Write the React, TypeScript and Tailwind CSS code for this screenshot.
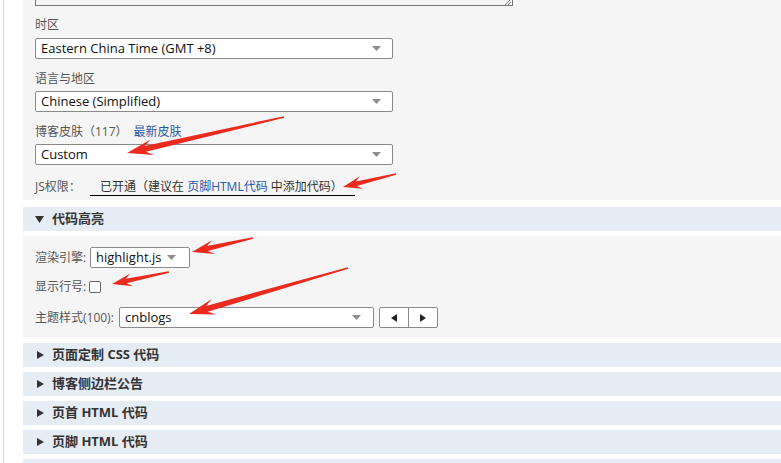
import type { ReactNode } from "react";

const FONT = { fontFamily: '"Open Sans", "Noto Sans CJK SC", sans-serif' };

type Arrow = { x1: number; y1: number; x2: number; y2: number; head: number; half: number; shaft: number };

const ARROWS: Arrow[] = [
  { x1: 284, y1: 117, x2: 127, y2: 153, head: 26, half: 8, shaft: 6 },
  { x1: 396, y1: 174, x2: 343, y2: 187, head: 19, half: 6.5, shaft: 4.5 },
  { x1: 253, y1: 238, x2: 192, y2: 252, head: 22, half: 7, shaft: 5 },
  { x1: 169, y1: 272, x2: 112, y2: 284, head: 20, half: 6.5, shaft: 4.5 },
  { x1: 348, y1: 268, x2: 189, y2: 314, head: 26, half: 8, shaft: 6 },
];

function arrowPoints(a: Arrow) {
  const dx = a.x2 - a.x1;
  const dy = a.y2 - a.y1;
  const len = Math.hypot(dx, dy);
  const ux = dx / len;
  const uy = dy / len;
  const nx = -uy;
  const ny = ux;
  const bx = a.x2 - ux * a.head * 0.72;
  const by = a.y2 - uy * a.head * 0.72;
  const cx = a.x2 - ux * a.head;
  const cy = a.y2 - uy * a.head;
  const pts: [number, number][] = [
    [a.x1 + nx * 0.8, a.y1 + ny * 0.8],
    [bx + (nx * a.shaft) / 2, by + (ny * a.shaft) / 2],
    [cx + nx * a.half, cy + ny * a.half],
    [a.x2, a.y2],
    [cx - nx * a.half, cy - ny * a.half],
    [bx - (nx * a.shaft) / 2, by - (ny * a.shaft) / 2],
    [a.x1 - nx * 0.8, a.y1 - ny * 0.8],
  ];
  return pts.map((p) => p.map((v) => v.toFixed(1)).join(",")).join(" ");
}

function Caret() {
  return (
    <svg width="9" height="5" viewBox="0 0 9 5" className="shrink-0">
      <path d="M0 0h9L4.5 5z" fill="#8d8d8d" />
    </svg>
  );
}

function Select({ value, className, caretAt }: { value: string; className: string; caretAt: string }) {
  return (
    <div className={`relative flex h-[21px] items-center rounded-[2px] border border-[#8a8a8a] bg-white pl-[5px] text-[13px] text-[#111] ${className}`}>
      <span className="leading-none">{value}</span>
      <span className={`absolute top-[7px] ${caretAt}`}>
        <Caret />
      </span>
    </div>
  );
}

function Label({ children }: { children: ReactNode }) {
  return <div className="h-[20px] text-[12px] leading-[20px] text-[#555]">{children}</div>;
}

function SectionHeader({ title, open }: { title: string; open?: boolean }) {
  return (
    <div className="flex h-[24px] shrink-0 items-center bg-[#e6ecf3] text-[13px] font-bold text-[#333]">
      {open ? (
        <svg width="9" height="7" viewBox="0 0 9 7" className="ml-[12px] mr-[8px]">
          <path d="M0 0h9L4.5 7z" fill="#333" />
        </svg>
      ) : (
        <svg width="7" height="8" viewBox="0 0 7 8" className="ml-[14px] mr-[8px]">
          <path d="M0 0l7 4-7 4z" fill="#333" />
        </svg>
      )}
      <span>{title}</span>
    </div>
  );
}

export default function App() {
  return (
    <div className="relative flex h-[463px] w-[781px] overflow-hidden bg-white" style={FONT}>
      <div className="ml-[3px] w-[20px] shrink-0 border-l border-[#dedede]" />

      <div className="flex min-w-0 flex-1 flex-col">
        {/* general settings */}
        <div className="flex h-[200px] shrink-0 flex-col bg-[#f5f5f5] pl-[12px]">
          <div className="relative h-[6px] w-[478px] border-x border-b border-[#777]">
            <svg width="8" height="6" viewBox="0 0 8 6" className="absolute bottom-0 right-0">
              <path d="M1 6l6-6M4 6l3-3" stroke="#777" strokeWidth="1" />
            </svg>
          </div>

          <div className="mt-[9px]">
            <Label>时区</Label>
          </div>
          <Select value="Eastern China Time (GMT +8)" className="mt-[3px] w-[358px]" caretAt="right-[11px]" />

          <div className="mt-[10px]">
            <Label>语言与地区</Label>
          </div>
          <Select value="Chinese (Simplified)" className="mt-[2px] w-[358px]" caretAt="right-[11px]" />

          <div className="mt-[10px]">
            <Label>
              博客皮肤（117）<span className="ml-[6px] text-[#2857a4]">最新皮肤</span>
            </Label>
          </div>
          <Select value="Custom" className="mt-[2px] w-[358px]" caretAt="right-[11px]" />

          <div className="mt-[12px] flex h-[20px] items-center text-[12px] text-[#555]">
            <span className="w-[55px]">JS权限：</span>
            <span className="inline-block h-[17px] border-b border-black pl-[10px] pr-[12px] leading-[15px] text-[#333]">
              已开通（建议在 <span className="text-[#2857a4]">页脚HTML代码</span> 中添加代码）
            </span>
          </div>
        </div>

        <div className="mt-[7px]">
          <SectionHeader title="代码高亮" open />
        </div>

        {/* code highlight */}
        <div className="mt-[5px] flex h-[101px] shrink-0 flex-col bg-[#f5f5f5] pl-[12px] pt-[11px] text-[12px] text-[#555]">
          <div className="flex items-center">
            <span className="w-[55px]">渲染引擎:</span>
            <Select value="highlight.js" className="w-[100px]" caretAt="right-[13px]" />
          </div>
          <div className="mt-[9px] flex h-[20px] items-center">
            <span className="w-[54px]">显示行号:</span>
            <span className="h-[12px] w-[12px] rounded-[2px] border border-[#666] bg-white" />
          </div>
          <div className="mt-[10px] flex items-center">
            <span className="w-[84px]">主题样式(100):</span>
            <Select value="cnblogs" className="w-[255px]" caretAt="right-[12px]" />
            <div className="ml-[5px] flex h-[21px] w-[59px] rounded-[2px] border border-[#8a8a8a] bg-white">
              <div className="flex flex-1 items-center justify-center border-r border-[#8a8a8a]">
                <svg width="6" height="8" viewBox="0 0 6 8">
                  <path d="M6 0v8L0 4z" fill="#222" />
                </svg>
              </div>
              <div className="flex flex-1 items-center justify-center">
                <svg width="6" height="8" viewBox="0 0 6 8">
                  <path d="M0 0l6 4-6 4z" fill="#222" />
                </svg>
              </div>
            </div>
          </div>
        </div>

        <div className="mt-[6px] flex flex-col gap-[5px]">
          <SectionHeader title="页面定制 CSS 代码" />
          <SectionHeader title="博客侧边栏公告" />
          <SectionHeader title="页首 HTML 代码" />
          <SectionHeader title="页脚 HTML 代码" />
          <SectionHeader title="" />
        </div>
      </div>

      <svg className="pointer-events-none absolute inset-0" width="781" height="463">
        {ARROWS.map((a, i) => (
          <polygon key={i} points={arrowPoints(a)} fill="#ec2a1e" />
        ))}
      </svg>
    </div>
  );
}
